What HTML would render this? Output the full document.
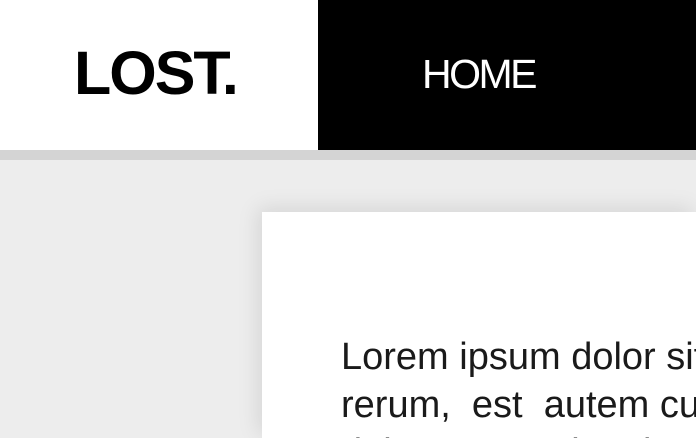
<!DOCTYPE html>
<html><head><style>
html,body{margin:0;padding:0;width:696px;height:438px;overflow:hidden;background:#ededed;font-family:"Liberation Sans",sans-serif;position:relative}
.hdr{position:absolute;left:0;top:0;width:696px;height:150px;background:#fff}
.logo{position:absolute;left:74px;top:38px;font-size:61px;font-weight:bold;letter-spacing:-2px;line-height:70px;color:#000}
.nav{position:absolute;left:318px;top:0;width:378px;height:150px;background:#000;overflow:hidden}
.home{position:absolute;left:104px;top:51px;font-size:41px;letter-spacing:-2.5px;color:#fff;line-height:46px}
.bar{position:absolute;left:0;top:150px;width:696px;height:10px;background:#d4d4d4}
.card{position:absolute;left:262px;top:212px;width:434px;height:226px;background:#fff;box-shadow:-4px -4px 20px rgba(0,0,0,0.1);overflow:hidden}
.txt{position:absolute;left:79px;top:121px;width:355px;height:105px;overflow:hidden;font-size:38px;line-height:48px;color:#1a1a1a;white-space:nowrap}
</style></head><body>
<div class="hdr"><div class="logo">LOST.</div><div class="nav"><div class="home">HOME</div></div></div>
<div class="bar"></div>
<div class="card"><div class="txt">Lorem ipsum dolor sit amet<br>rerum,&nbsp; est&nbsp; autem&nbsp;cupiditate<br>dolorem quasi molestiae</div></div>
</body></html>
